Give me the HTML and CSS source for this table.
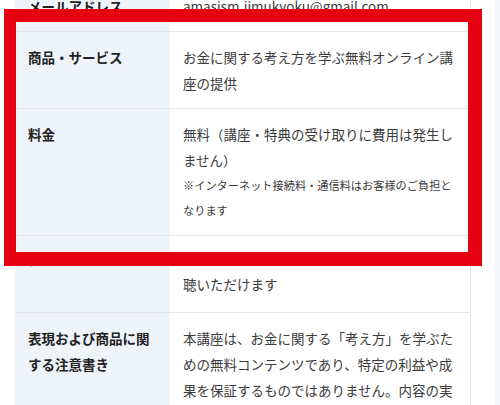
FILE: index.html
```html
<!DOCTYPE html>
<html lang="ja">
<head>
<meta charset="utf-8">
<title>特定商取引法に基づく表記</title>
<link rel="stylesheet" href="styles.css">
</head>
<body>
<div class="page">
  <main class="main">
    <table class="spec">
      <tbody>
        <tr>
          <th>メールアドレス</th>
          <td>amasism.jimukyoku@gmail.com</td>
        </tr>
        <tr>
          <th>商品・サービス</th>
          <td>お金に関する考え方を学ぶ無料オンライン講座の提供</td>
        </tr>
        <tr>
          <th>料金</th>
          <td>
            <p class="main-text">無料（講座・特典の受け取りに費用は発生しません）</p>
            <p class="note">※インターネット接続料・通信料はお客様のご負担となります</p>
          </td>
        </tr>
        <tr class="row-covered">
          <th>視聴方法</th>
          <td>スマートフォン・パソコンからいつでもご視<br>聴いただけます</td>
        </tr>
        <tr>
          <th>表現および商品に関する注意書き</th>
          <td>本講座は、お金に関する「考え方」を学ぶための無料コンテンツであり、特定の利益や成果を保証するものではありません。内容の実践はご自身の判断でお願いいたします。</td>
        </tr>
      </tbody>
    </table>
  </main>
  <div class="side"></div>
  <div class="highlight" aria-hidden="true"></div>
</div>
</body>
</html>
```
FILE: styles.css
```css
html, body {
  margin: 0;
  padding: 0;
  background: #ffffff;
}

body {
  font-family: "Noto Sans CJK JP", "Noto Sans", sans-serif;
  color: #333333;
  overflow: hidden;
}

.page {
  position: relative;
  display: flex;
  width: 500px;
  height: 405px;
  overflow: hidden;
}

.main {
  flex: 1;
  padding-left: 15px;
}

.side {
  width: 5px;
  background: #f6f7f8;
}

.spec {
  width: 456px;
  margin-top: -20px;
  border-collapse: collapse;
  table-layout: fixed;
  border-right: 1px solid #e4e6ea;
}

.spec th,
.spec td {
  border-top: 1px solid #e4e6ea;
  border-bottom: 1px solid #e4e6ea;
  padding: 12px 13px 12px 13px;
  vertical-align: top;
  text-align: left;
  font-size: 13.5px;
  line-height: 26px;
}

.spec th {
  width: 129px;
  background: #eff4fb;
  color: #222222;
  font-weight: 700;
}

.spec td {
  background: #ffffff;
  color: #3c3c3c;
  font-weight: 400;
}

.spec .row-covered th,
.spec .row-covered td {
  padding-top: 9px;
  padding-bottom: 15px;
}

.spec .row-covered th {
  padding-top: 8.5px;
}

.main-text {
  margin: 0;
}

.note {
  margin: 0;
  font-size: 11.2px;
  line-height: 25px;
}

.highlight {
  position: absolute;
  left: 4px;
  top: 9px;
  width: 452px;
  height: 230px;
  border-style: solid;
  border-color: #e50012;
  border-width: 13px 14px 14px 12px;
  pointer-events: none;
}
```
